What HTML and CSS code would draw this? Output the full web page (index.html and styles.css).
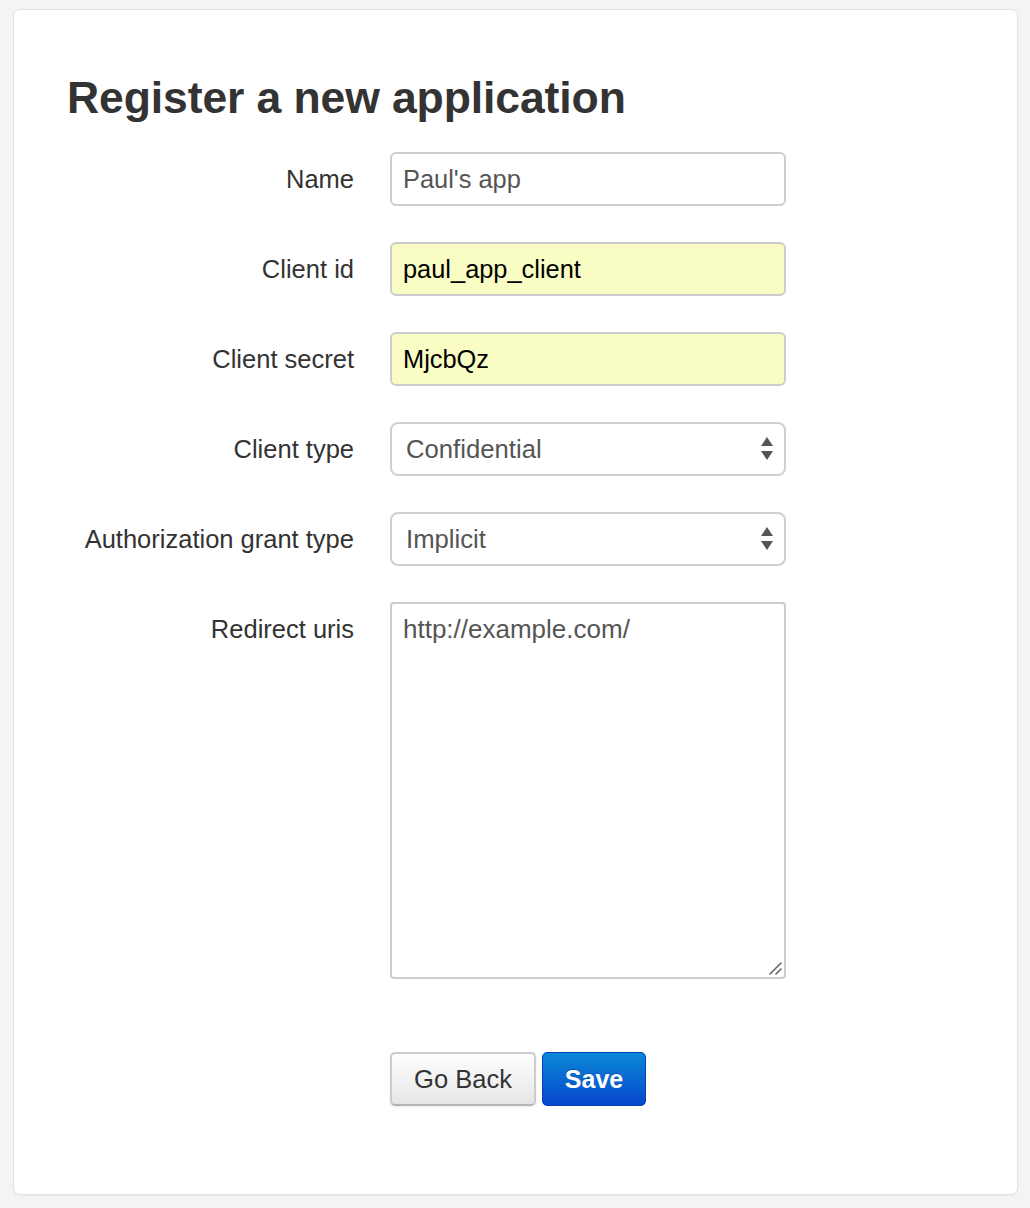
FILE: index.html
```html
<!DOCTYPE html>
<html>
<head>
<meta charset="utf-8">
<link rel="stylesheet" href="styles.css">
</head>
<body>
<div class="card">
  <h1 class="title">Register a new application</h1>
  <form class="form">
    <div class="row">
      <label class="label">Name</label>
      <div class="field">Paul's app</div>
    </div>
    <div class="row">
      <label class="label">Client id</label>
      <div class="field autofill">paul_app_client</div>
    </div>
    <div class="row">
      <label class="label">Client secret</label>
      <div class="field autofill">MjcbQz</div>
    </div>
    <div class="row">
      <label class="label">Client type</label>
      <div class="field select">Confidential
        <svg class="arrows" width="14" height="26" viewBox="0 0 14 26"><path d="M7 1 L13 10 L1 10 Z M1 15 L13 15 L7 24 Z" fill="#555"/></svg>
      </div>
    </div>
    <div class="row">
      <label class="label">Authorization grant type</label>
      <div class="field select">Implicit
        <svg class="arrows" width="14" height="26" viewBox="0 0 14 26"><path d="M7 1 L13 10 L1 10 Z M1 15 L13 15 L7 24 Z" fill="#555"/></svg>
      </div>
    </div>
    <div class="row">
      <label class="label">Redirect uris</label>
      <div class="field textarea">http://example.com/
        <svg class="grip" width="14" height="14" viewBox="0 0 14 14"><path d="M2 13 L13 2 M8 13 L13 8" stroke="#666" stroke-width="1.6" stroke-linecap="round"/></svg>
      </div>
    </div>
    <div class="actions">
      <button type="button" class="btn btn-default">Go Back</button>
      <button type="button" class="btn btn-primary">Save</button>
    </div>
  </form>
</div>
</body>
</html>
```
FILE: styles.css
```css
html, body {
  margin: 0;
  padding: 0;
  background: #f4f4f4;
}
body {
  padding: 9px 12px 14px 13px;
  font-family: "Liberation Sans", Arial, Helvetica, sans-serif;
  color: #333;
}
.card {
  background: #fff;
  border: 1px solid #e3e3e3;
  border-radius: 7px;
  box-shadow: 0 1px 2px rgba(0,0,0,0.05);
  height: 1186px;
  box-sizing: border-box;
  padding: 0 0 0 53px;
}
.title {
  margin: 0;
  padding-top: 62px;
  font-size: 44.5px;
  line-height: 52px;
  font-weight: bold;
  color: #333;
  letter-spacing: -0.1px;
}
.form {
  margin-top: 28px;
}
.row {
  display: grid;
  grid-template-columns: 287px 396px;
  column-gap: 36px;
  align-items: start;
  margin-bottom: 36px;
}
.label {
  text-align: right;
  font-size: 25.5px;
  line-height: 54px;
  color: #333;
}
.field {
  position: relative;
  box-sizing: border-box;
  height: 54px;
  border: 2px solid #ccc;
  border-radius: 6px;
  padding: 0 11px;
  font-size: 25.4px;
  line-height: 50px;
  color: #555;
  background: #fff;
}
.autofill {
  background: #f9fcc3;
  color: #000;
}
.select {
  padding-left: 14px;
  border-color: #cfcfcf;
  border-radius: 8px;
  font-size: 25.7px;
}
.arrows {
  position: absolute;
  right: 10px;
  top: 12px;
}
.textarea {
  height: 377px;
  line-height: 50px;
  border-radius: 4px;
  font-size: 26px;
}
.grip {
  position: absolute;
  right: 2px;
  bottom: 2px;
}
.actions {
  display: flex;
  gap: 6px;
  padding-left: 323px;
  margin-top: 73px;
}
.btn {
  height: 54px;
  box-sizing: border-box;
  font-family: "Liberation Sans", Arial, Helvetica, sans-serif;
  font-size: 25.5px;
  border-radius: 5px;
  padding: 0;
  cursor: pointer;
}
.btn-default {
  width: 146px;
  color: #333;
  background: linear-gradient(#ffffff, #e6e6e6);
  border: 2px solid #cccccc;
  border-bottom-color: #b3b3b3;
  box-shadow: 0 1px 2px rgba(0,0,0,0.08);
}
.btn-primary {
  width: 104px;
  color: #fff;
  font-weight: bold;
  font-size: 25px;
  background: linear-gradient(#0a88d6, #0546cc);
  border: 1px solid #0441b8;
  text-shadow: 0 -1px 0 rgba(0,0,0,0.2);
}
```
